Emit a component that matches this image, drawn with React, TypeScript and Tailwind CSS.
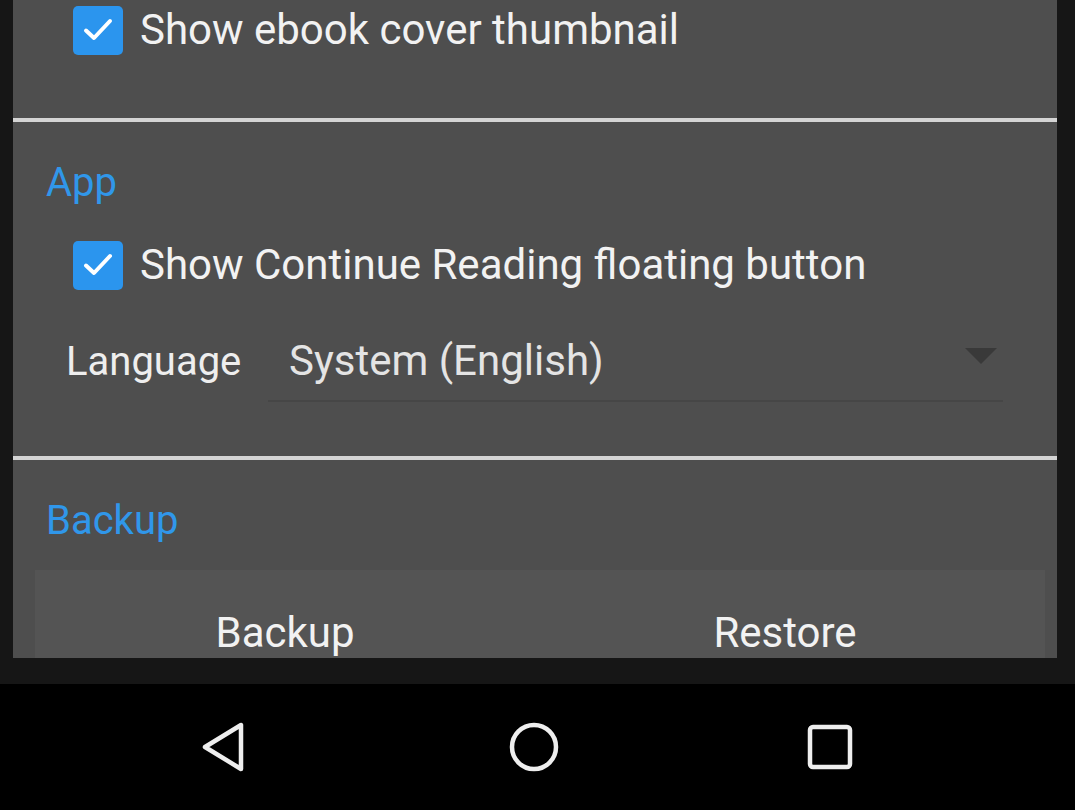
import React from "react";

function CheckBox() {
  return (
    <div className="w-[50px] h-[49px] rounded-[5px] bg-[#2b95ee] flex items-center justify-center shrink-0">
      <svg width="34" height="30" viewBox="0 0 34 30" fill="none">
        <path d="M5 15.5 L13 23 L29 6" stroke="#ffffff" strokeWidth="4" strokeLinecap="round" strokeLinejoin="round" />
      </svg>
    </div>
  );
}

function CheckRow({ label }: { label: string }) {
  return (
    <div className="flex items-center gap-[17px] pl-[60px] h-[50px]">
      <CheckBox />
      <span className="text-[42px] text-[#f2f2f2] leading-none whitespace-nowrap">{label}</span>
    </div>
  );
}

function Divider() {
  return <div className="h-[4px] bg-[#d4d4d4] shrink-0" />;
}

export default function App() {
  return (
    <div
      className="w-[1075px] h-[810px] bg-[#161616] flex flex-col overflow-hidden"
      style={{ fontFamily: "Roboto, 'Noto Sans', sans-serif" }}
    >
      <div className="ml-[13px] w-[1044px] h-[658px] bg-[#4e4e4e] flex flex-col overflow-hidden shrink-0">
        {/* first section tail */}
        <div className="pt-[5px] h-[118px] shrink-0">
          <CheckRow label="Show ebook cover thumbnail" />
        </div>
        <Divider />
        {/* App section */}
        <div className="h-[334px] shrink-0 flex flex-col">
          <div className="pl-[33px] pt-[41px] h-[118px] shrink-0 text-[40px] text-[#3097ea] leading-none">App</div>
          <CheckRow label="Show Continue Reading floating button" />
          <div className="flex items-center pl-[53px] mt-[31px] h-[81px]">
            <span className="w-[202px] shrink-0 text-[40px] text-[#eeeeee] leading-none">Language</span>
            <div className="w-[735px] h-full border-b-[2px] border-[#464646] flex items-center justify-between pl-[21px] pr-[6px]">
              <span className="text-[42px] text-[#e4e4e4] leading-none whitespace-nowrap">System (English)</span>
              <svg width="32" height="17" viewBox="0 0 32 17" className="mb-[8px]">
                <path d="M0 0 L32 0 L16 16 Z" fill="#393939" />
              </svg>
            </div>
          </div>
        </div>
        <Divider />
        {/* Backup section */}
        <div className="flex flex-col flex-1">
          <div className="pl-[33px] pt-[41px] h-[110px] shrink-0 text-[40px] text-[#3097ea] leading-none">Backup</div>
          <div className="ml-[22px] mr-[12px] flex-1 bg-[#545454] flex">
            <div className="w-[500px] flex items-end justify-center pb-[4px]">
              <span className="text-[42px] text-[#f2f2f2] leading-none">Backup</span>
            </div>
            <div className="w-[500px] flex items-end justify-center pb-[4px]">
              <span className="text-[42px] text-[#f2f2f2] leading-none">Restore</span>
            </div>
          </div>
        </div>
      </div>
      <div className="h-[26px] shrink-0" />
      <div className="flex-1 bg-black flex items-center">
        <div className="w-[201px] shrink-0" />
        <svg width="44" height="52" viewBox="0 0 44 52" className="shrink-0">
          <path d="M4 26 L40 4 L40 48 Z" fill="none" stroke="#eeeeee" strokeWidth="4.5" strokeLinejoin="round" />
        </svg>
        <div className="w-[263px] shrink-0" />
        <svg width="52" height="52" viewBox="0 0 52 52" className="shrink-0">
          <circle cx="26" cy="26" r="22" fill="none" stroke="#eeeeee" strokeWidth="4.5" />
        </svg>
        <div className="w-[247px] shrink-0" />
        <svg width="46" height="46" viewBox="0 0 46 46" className="shrink-0">
          <rect x="3" y="3" width="40" height="40" rx="3" fill="none" stroke="#eeeeee" strokeWidth="4.5" />
        </svg>
      </div>
    </div>
  );
}
